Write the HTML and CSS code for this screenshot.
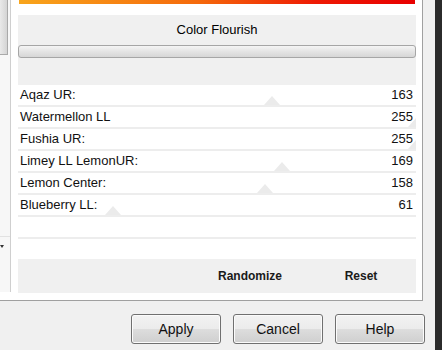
FILE: index.html
```html
<!DOCTYPE html>
<html>
<head>
<meta charset="utf-8">
<link rel="stylesheet" href="styles.css">
</head>
<body>
<div class="window">
  <div class="main">
    <div class="top">
      <div class="scroll">
        <div class="thumb"></div>
        <div class="track"></div>
        <div class="arrowbtn"><span class="arrow"></span></div>
      </div>
      <div class="gap"></div>
      <div class="panel">
        <div class="colorbar"></div>
        <div class="header">
          <div class="title">Color Flourish</div>
          <div class="slider"></div>
        </div>
        <div class="row"><span class="thumbtri" style="--v:163"></span><span class="label">Aqaz UR:</span><span class="val">163</span></div>
        <div class="row"><span class="thumbtri" style="--v:255"></span><span class="label">Watermellon LL</span><span class="val">255</span></div>
        <div class="row"><span class="thumbtri" style="--v:255"></span><span class="label">Fushia UR:</span><span class="val">255</span></div>
        <div class="row"><span class="thumbtri" style="--v:169"></span><span class="label">Limey LL LemonUR:</span><span class="val">169</span></div>
        <div class="row"><span class="thumbtri" style="--v:158"></span><span class="label">Lemon Center:</span><span class="val">158</span></div>
        <div class="row"><span class="thumbtri" style="--v:61"></span><span class="label">Blueberry LL:</span><span class="val">61</span></div>
        <div class="row empty"></div>
        <div class="spacer"></div>
        <div class="footer">
          <span></span>
          <span class="fbtn">Randomize</span>
          <span class="fbtn">Reset</span>
        </div>
      </div>
      <div class="rgap"></div>
    </div>
    <div class="buttons">
      <button class="btn">Apply</button>
      <button class="btn">Cancel</button>
      <button class="btn">Help</button>
    </div>
  </div>
  <div class="edge"></div>
</div>
</body>
</html>
```
FILE: styles.css
```css
* { box-sizing: border-box; }
html, body { margin: 0; padding: 0; }
body {
  width: 442px;
  height: 350px;
  overflow: hidden;
  font-family: "Liberation Sans", Arial, sans-serif;
  color: #000;
  background: #f0f0f0;
}
.window {
  display: flex;
  width: 442px;
  height: 350px;
}
.main {
  flex: 1;
  display: flex;
  flex-direction: column;
  background: #f0f0f0;
}
.edge {
  width: 7px;
  background: #2b2b2b;
}
.top {
  width: 423px;
  height: 301px;
  display: flex;
  background: #fff;
  border-right: 1px solid #a0a0a0;
  border-bottom: 1px solid #a0a0a0;
}
.scroll {
  width: 11px;
  height: 292px;
  background: #f7f7f7;
  border-right: 1px solid #cfcfcf;
  display: flex;
  flex-direction: column;
}
.thumb {
  width: 8px;
  height: 55px;
  background: linear-gradient(to right, #e9e9e9, #d4d4d4);
  border-right: 1px solid #a9a9a9;
  border-bottom: 1px solid #a9a9a9;
}
.track { flex: 1; }
.arrowbtn {
  height: 56px;
  border-top: 1px solid #e2e2e2;
  padding-top: 8px;
}
.arrow {
  display: block;
  width: 0;
  height: 0;
  border-left: 2px solid transparent;
  border-right: 2px solid transparent;
  border-top: 3px solid #333;
  margin-left: 0;
}
.gap { width: 7px; }
.rgap { flex: 1; }
.panel {
  width: 398px;
  display: flex;
  flex-direction: column;
}
.colorbar {
  height: 4px;
  margin: 0 1px;
  background: linear-gradient(to right, #f8a51c, #f56a0c 45%, #ee1a04 75%, #e80000);
  margin-bottom: 11px;
}
.header {
  height: 70px;
  background: #f0f0f0;
}
.title {
  height: 29px;
  line-height: 29px;
  text-align: center;
  font-size: 13px;
}
.slider {
  margin-top: 1px;
  height: 13px;
  border: 1px solid #a6a6a6;
  border-radius: 3px;
  background: linear-gradient(to bottom, #f5f5f5, #e4e4e4 50%, #d6d6d6);
}
.row {
  position: relative;
  overflow: hidden;
  height: 22px;
  border-bottom: 2px solid #ededed;
  display: flex;
  justify-content: space-between;
  align-items: center;
  padding: 0 3px 0 2px;
  font-size: 13px;
  line-height: 20px;
  color: #111;
}
.label, .val { position: relative; }
.thumbtri {
  position: absolute;
  bottom: 0;
  left: calc(var(--v) / 255 * 100% - 8px);
  width: 0;
  height: 0;
  border-left: 8px solid transparent;
  border-right: 8px solid transparent;
  border-bottom: 9px solid #ebebeb;
}
.spacer { height: 20px; }
.footer {
  height: 34px;
  background: #f0f0f0;
  display: grid;
  grid-template-columns: 1fr 112px 110px;
  align-items: center;
  font-size: 12px;
  font-weight: bold;
  color: #1a1a1a;
}
.fbtn { text-align: center; }
.buttons {
  flex: 1;
  display: flex;
  justify-content: flex-end;
  align-items: flex-start;
  gap: 12px;
  padding: 13px 10px 0 0;
}
.btn {
  width: 90px;
  height: 30px;
  font-family: "Liberation Sans", Arial, sans-serif;
  font-size: 14px;
  color: #111;
  border: 1px solid #707070;
  border-radius: 3px;
  box-shadow: inset 0 0 0 1px #fbfbfb;
  background: linear-gradient(to bottom, #f2f2f2 0%, #ebebeb 50%, #dddddd 51%, #cfcfcf 100%);
  padding: 0;
  margin: 0;
}
```
